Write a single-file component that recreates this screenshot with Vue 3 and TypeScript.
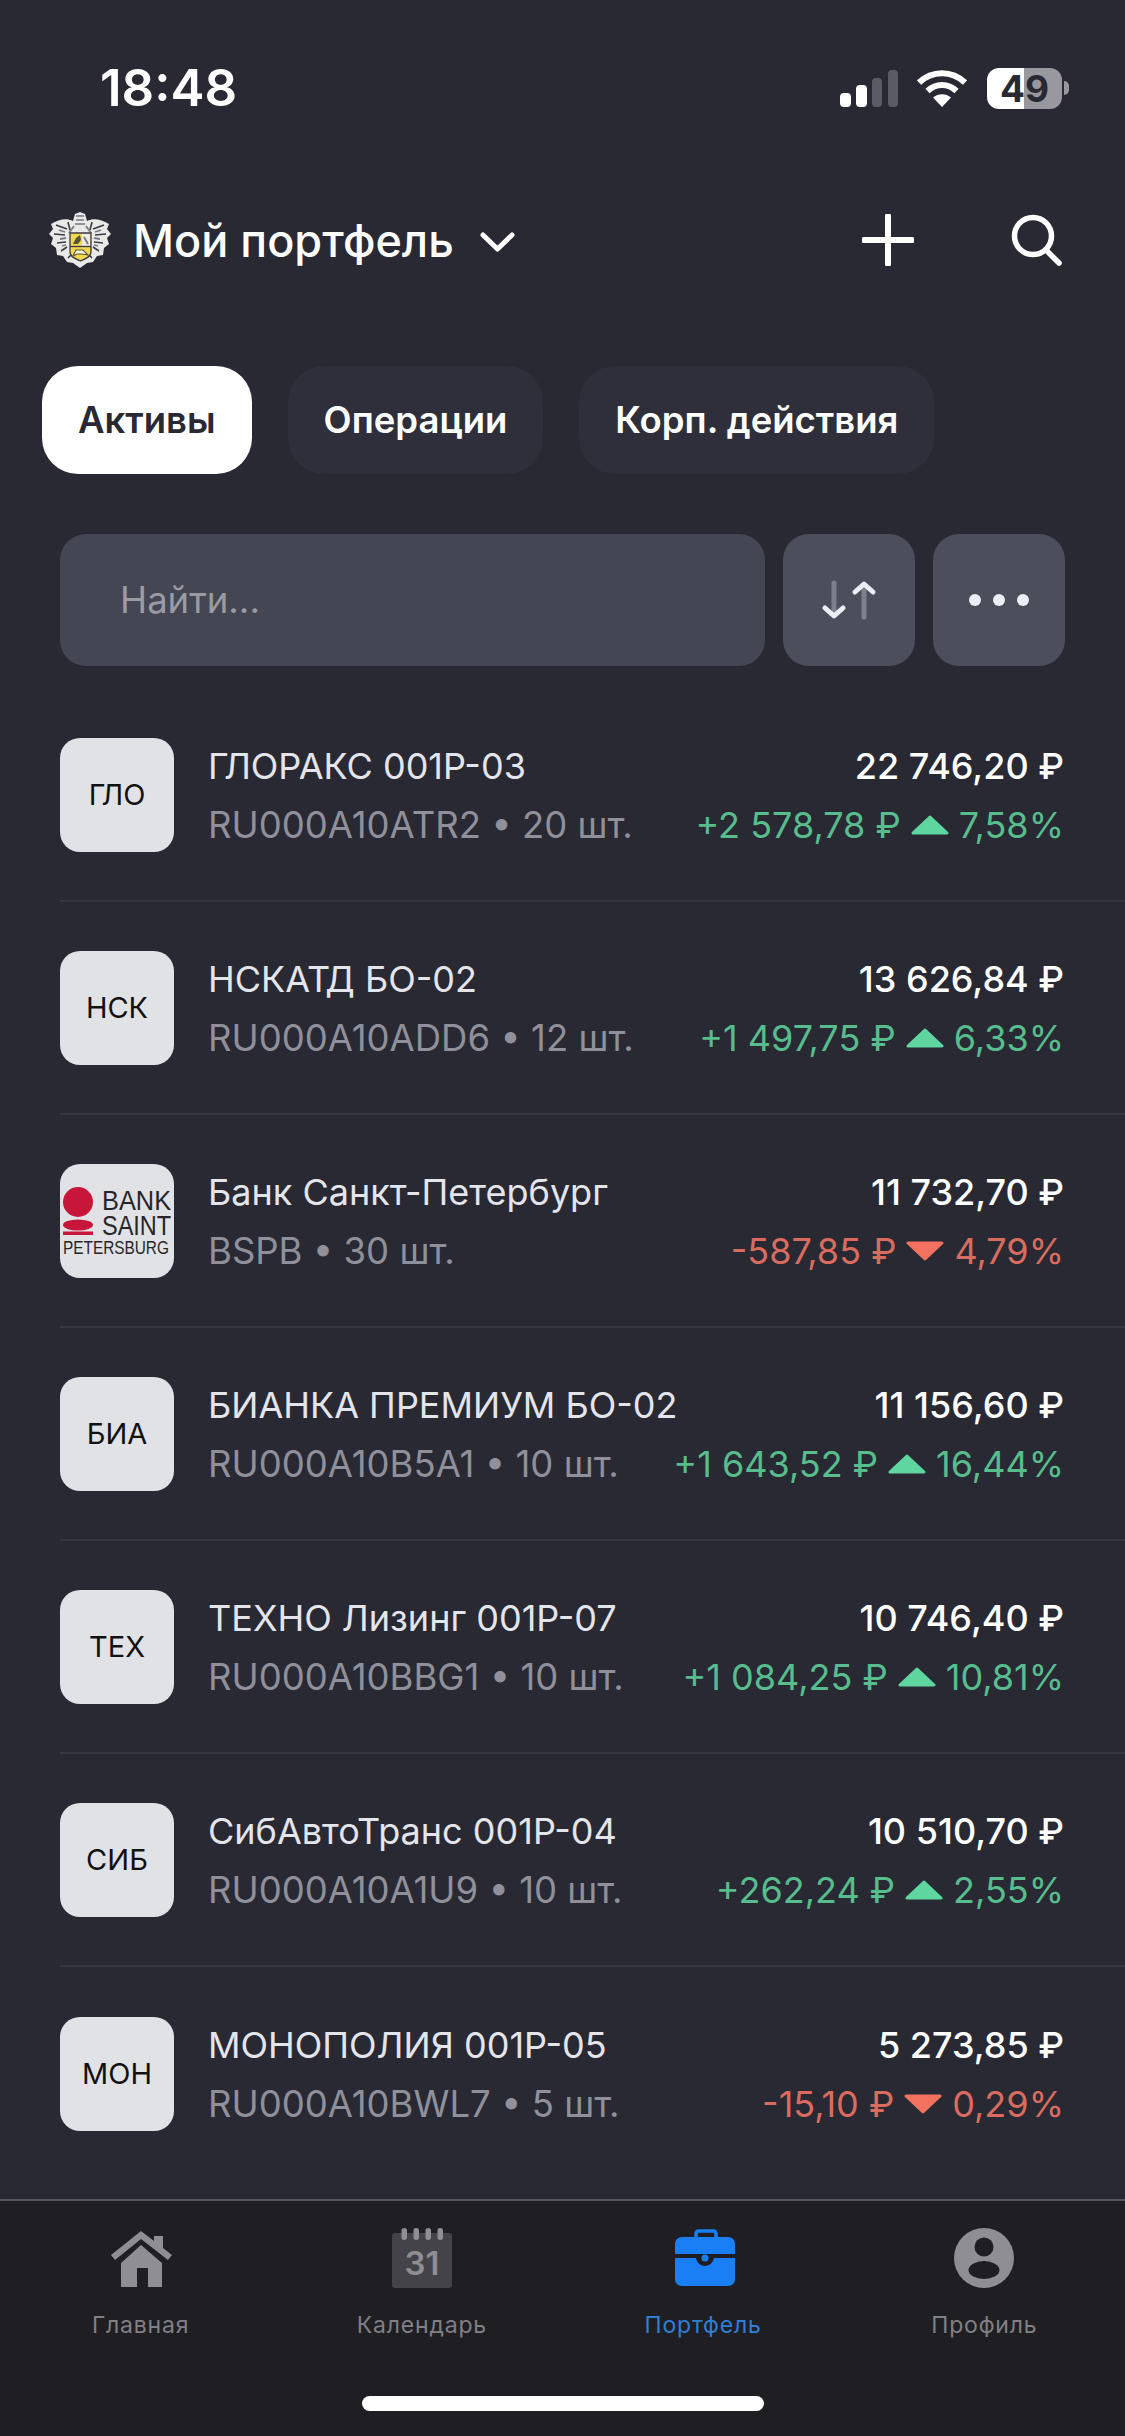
<script setup lang="ts">
interface Asset {
  tile: string
  name: string
  code: string
  qty: string
  total: string
  diff: string
  pct: string
  up: boolean
}

const assets: Asset[] = [
  { tile: 'ГЛО', name: 'ГЛОРАКС 001Р-03', code: 'RU000A10ATR2', qty: '20 шт.', total: '22 746,20 ₽', diff: '+2 578,78 ₽', pct: '7,58%', up: true },
  { tile: 'НСК', name: 'НСКАТД БО-02', code: 'RU000A10ADD6', qty: '12 шт.', total: '13 626,84 ₽', diff: '+1 497,75 ₽', pct: '6,33%', up: true },
  { tile: '', name: 'Банк Санкт-Петербург', code: 'BSPB', qty: '30 шт.', total: '11 732,70 ₽', diff: '-587,85 ₽', pct: '4,79%', up: false },
  { tile: 'БИА', name: 'БИАНКА ПРЕМИУМ БО-02', code: 'RU000A10B5A1', qty: '10 шт.', total: '11 156,60 ₽', diff: '+1 643,52 ₽', pct: '16,44%', up: true },
  { tile: 'ТЕХ', name: 'ТЕХНО Лизинг 001Р-07', code: 'RU000A10BBG1', qty: '10 шт.', total: '10 746,40 ₽', diff: '+1 084,25 ₽', pct: '10,81%', up: true },
  { tile: 'СИБ', name: 'СибАвтоТранс 001Р-04', code: 'RU000A10A1U9', qty: '10 шт.', total: '10 510,70 ₽', diff: '+262,24 ₽', pct: '2,55%', up: true },
  { tile: 'МОН', name: 'МОНОПОЛИЯ 001Р-05', code: 'RU000A10BWL7', qty: '5 шт.', total: '5 273,85 ₽', diff: '-15,10 ₽', pct: '0,29%', up: false },
]

const tabs = ['Активы', 'Операции', 'Корп. действия']
</script>

<template>
  <div class="screen">
    <div class="status">
      <span class="time">18:48</span>
      <div class="status-icons">
        <svg class="signal" width="58" height="37" viewBox="0 0 58 37">
          <rect x="0" y="23" width="11" height="14" rx="4" fill="#fff" />
          <rect x="16" y="15" width="11" height="22" rx="4" fill="#fff" />
          <rect x="32" y="8" width="10" height="29" rx="4" fill="#5a5b66" />
          <rect x="48" y="0" width="10" height="37" rx="4" fill="#5a5b66" />
        </svg>
        <svg class="wifi" width="50" height="37" viewBox="0 0 50 37">
          <path d="M2 12.5C15 0 35 0 48 12.5" fill="none" stroke="#fff" stroke-width="6" />
          <path d="M10.5 21C19 13 31 13 39.500 21" fill="none" stroke="#fff" stroke-width="6" />
          <path d="M25 37L16 27.500C21 23 29 23 34 27.500Z" fill="#fff" />
        </svg>
        <div class="battery"><span>49</span></div>
        <div class="battery-cap"></div>
      </div>
    </div>

    <header class="head">
      <svg class="emblem" width="66" height="60" viewBox="0 0 66 60">
        <path d="M26 11L28 4L33 2L38 4L40 11C46 8 54 9 62 14L60 19L64 24L60 28L62 34L57 38L56 45L50 46L46 52L40 53L33 58L26 53L20 52L16 46L10 45L9 38L4 34L6 28L2 24L6 19L4 14C12 9 20 8 26 11Z" fill="#e9e9e7" />
        <path d="M29 6H37M29 10H37M28 14H38" stroke="#77787e" stroke-width="1.500" fill="none" />
        <path d="M9 15L20 19M7 24L18 25M10 33L19 32M14 41L20 37M21 12L23 20M45 12L43 20M57 15L46 19M59 24L48 25M56 33L47 32M52 41L46 37M21 48L25 44M45 48L41 44" stroke="#3a3b44" stroke-width="1.600" fill="none" />
        <path d="M12 20L18 22M13 29L19 28M15 36L19 35M54 20L48 22M53 29L47 28M51 36L47 35M27 16L22 23M39 16L44 23" stroke="#7c7d84" stroke-width="1.800" fill="none" />
        <path d="M23 23H44V42C44 47 38 49 33.500 51C29 49 23 47 23 42Z" fill="#efd84b" stroke="#3a3b44" stroke-width="1.300" />
        <path d="M35 24H43V36H35Z" fill="#ecebe2" />
        <path d="M23 36.500H44" stroke="#3a3b44" stroke-width="1.300" />
        <path d="M26 34L29 28L33 25L34 30L31 34Z" fill="#55553a" />
        <path d="M26 46L29 40L36 40L41 45L35 44L30 44Z" fill="#faf6d8" stroke="#55553a" stroke-width="1.100" />
        <path d="M37 27L41 34" stroke="#77776a" stroke-width="1.800" />
      </svg>
      <span class="title">Мой портфель</span>
      <svg class="chevron" width="35" height="20" viewBox="0 0 35 20">
        <path d="M3 3L17.500 17L32 3" fill="none" stroke="#fff" stroke-width="5" stroke-linecap="round" stroke-linejoin="round" />
      </svg>
      <svg class="plus" width="52" height="52" viewBox="0 0 52 52">
        <path d="M26 2V50M2 26H50" fill="none" stroke="#fff" stroke-width="6" stroke-linecap="round" />
      </svg>
      <svg class="search" width="52" height="52" viewBox="0 0 52 52">
        <circle cx="23" cy="22" r="18.500" fill="none" stroke="#fff" stroke-width="5.500" />
        <path d="M37 37L49 49" fill="none" stroke="#fff" stroke-width="5.500" stroke-linecap="round" />
      </svg>
    </header>

    <nav class="tabs">
      <button v-for="(tab, i) in tabs" :key="tab" class="tab" :class="{ active: i === 0 }">{{ tab }}</button>
    </nav>

    <div class="tools">
      <div class="find"><span>Найти...</span></div>
      <button class="tool">
        <svg width="60" height="50" viewBox="4 -2 60 50">
          <path d="M19 6V38" stroke="#7d7f8c" stroke-width="5" stroke-linecap="round" />
          <path d="M49 10V40" stroke="#7d7f8c" stroke-width="5" stroke-linecap="round" />
          <path d="M10 31L19 39L28 31" fill="none" stroke="#eceef6" stroke-width="5" stroke-linecap="round" stroke-linejoin="round" />
          <path d="M40 15L49 7L58 15" fill="none" stroke="#eceef6" stroke-width="5" stroke-linecap="round" stroke-linejoin="round" />
        </svg>
      </button>
      <button class="tool">
        <svg width="60" height="14" viewBox="0 0 60 14">
          <circle cx="6" cy="7" r="6" fill="#eceef6" />
          <circle cx="30" cy="7" r="6" fill="#eceef6" />
          <circle cx="54" cy="7" r="6" fill="#eceef6" />
        </svg>
      </button>
    </div>

    <ul class="list">
      <li v-for="item in assets" :key="item.code" class="row">
        <div class="tile">
          <svg v-if="!item.tile" width="114" height="114" viewBox="0 0 114 114">
            <circle cx="18" cy="38" r="15" fill="#c8153a" />
            <ellipse cx="18" cy="61" rx="15" ry="5.500" fill="#c8153a" />
            <rect x="3" y="67.500" width="30" height="3.500" fill="#c8153a" />
            <text class="bank" font-size="27" transform="translate(42 46) scale(0.94 1)">BANK</text>
            <text class="bank" font-size="27" transform="translate(42 71) scale(0.87 1)">SAINT</text>
            <text class="bank" font-size="19" transform="translate(3 90) scale(0.81 1)">PETERSBURG</text>
          </svg>
          <span v-else>{{ item.tile }}</span>
        </div>
        <div class="info">
          <div class="name">{{ item.name }}</div>
          <div class="code">{{ item.code }} • {{ item.qty }}</div>
        </div>
        <div class="money">
          <div class="total">{{ item.total }}</div>
          <div class="change" :class="item.up ? 'up' : 'down'">
            <span>{{ item.diff }}</span>
            <svg v-if="item.up" width="38" height="20" viewBox="0 0 38 20">
              <path d="M19 2L36 18H2Z" fill="#5fd6a0" stroke="#5fd6a0" stroke-width="3" stroke-linejoin="round" />
            </svg>
            <svg v-else width="38" height="20" viewBox="0 0 38 20">
              <path d="M2 2H36L19 18Z" fill="#f3725f" stroke="#f3725f" stroke-width="3" stroke-linejoin="round" />
            </svg>
            <span>{{ item.pct }}</span>
          </div>
        </div>
      </li>
    </ul>

    <footer class="bar">
      <div class="bar-items">
        <div class="bar-item">
          <svg width="60" height="60" viewBox="0 0 60 60">
            <path d="M0 27L30 3L43 13V8H52V20L61 27L57 32L30 11L4 32Z" fill="#8e8e93" />
            <path d="M10 35L30 17L51 35V59H37V40H26V59H10Z" fill="#8e8e93" />
          </svg>
          <span>Главная</span>
        </div>
        <div class="bar-item">
          <svg width="60" height="60" viewBox="0 0 60 60">
            <rect x="0" y="5" width="60" height="55" rx="3" fill="#434349" />
            <rect x="9.500" y="0" width="5.500" height="12" rx="2.700" fill="#8e8e93" />
            <rect x="21.500" y="0" width="5.500" height="12" rx="2.700" fill="#8e8e93" />
            <rect x="33.500" y="0" width="5.500" height="12" rx="2.700" fill="#8e8e93" />
            <rect x="45.500" y="0" width="5.500" height="12" rx="2.700" fill="#8e8e93" />
            <text x="30" y="47" class="day" text-anchor="middle">31</text>
          </svg>
          <span>Календарь</span>
        </div>
        <div class="bar-item current">
          <svg width="60" height="60" viewBox="-2 0 60 60">
            <path d="M21 9V6C21 4 22 3 24 3H38C40 3 41 4 41 6V9" fill="none" stroke="#1a7ff5" stroke-width="3.500" />
            <path d="M0 26V16C0 12 3 9 7 9H53C57 9 60 12 60 16V26Z" fill="#1a7ff5" />
            <path d="M0 30H21C22 35 26 38 30 38C34 38 38 35 39 30H60V51C60 55 57 58 53 58H7C3 58 0 55 0 51Z" fill="#1a7ff5" />
            <circle cx="30" cy="30" r="3.500" fill="#1a7ff5" />
          </svg>
          <span>Портфель</span>
        </div>
        <div class="bar-item">
          <svg width="60" height="60" viewBox="0 0 60 60">
            <circle cx="30" cy="30" r="30" fill="#8e8e93" />
            <circle cx="30" cy="19" r="9.500" fill="#1f1f23" />
            <ellipse cx="30" cy="42" rx="15.500" ry="9" fill="#1f1f23" />
          </svg>
          <span>Профиль</span>
        </div>
      </div>
      <div class="home-line"></div>
    </footer>
  </div>
</template>

<style>
html,
body {
  margin: 0;
  background: #282933;
}
</style>

<style scoped>
.screen {
  width: 1125px;
  height: 2436px;
  display: flex;
  flex-direction: column;
  overflow: hidden;
  background: #282933;
  color: #fff;
  font-family: Inter, "Liberation Sans", sans-serif;
}
.status {
  height: 176px;
  box-sizing: border-box;
  padding: 60px 56px 0 100px;
  display: flex;
  justify-content: space-between;
  align-items: flex-start;
}
.time {
  font-size: 51px;
  line-height: 56px;
  font-weight: 600;
}
.status-icons {
  display: flex;
  align-items: center;
  height: 56px;
}
.wifi {
  margin-left: 19px;
}
.battery {
  margin-left: 20px;
  width: 75px;
  height: 41px;
  border-radius: 12px;
  background: linear-gradient(90deg, #fff 49%, #98989e 49%);
  color: #282933;
  font-size: 37px;
  line-height: 41px;
  font-weight: 700;
  text-align: center;
}
.battery-cap {
  width: 5px;
  height: 14px;
  margin-left: 2px;
  border-radius: 0 6px 6px 0;
  background: #98989e;
}
.head {
  height: 128px;
  display: flex;
  align-items: center;
  padding: 0 63px 0 47px;
}
.title {
  margin-left: 20px;
  font-size: 45px;
  font-weight: 500;
}
.chevron {
  margin-left: 26px;
  margin-top: 4px;
}
.plus {
  margin-left: auto;
}
.search {
  margin-left: 96px;
}
.tabs {
  display: flex;
  gap: 36px;
  padding: 62px 0 0 42px;
}
.tab {
  height: 108px;
  padding: 0 36px;
  border: none;
  border-radius: 36px;
  background: #2e2f3a;
  color: #fff;
  font-family: inherit;
  font-size: 36.500px;
  font-weight: 600;
}
.tab.active {
  background: #fff;
  color: #282933;
}
.tools {
  display: flex;
  gap: 18px;
  padding: 60px 60px 0;
}
.find {
  flex: 1;
  height: 132px;
  display: flex;
  align-items: center;
  padding-left: 60px;
  border-radius: 26px;
  background: #444653;
  color: #9a9ba3;
  font-size: 36.500px;
}
.tool {
  width: 132px;
  height: 132px;
  padding: 0;
  border: none;
  border-radius: 26px;
  background: #4c4e5b;
  display: flex;
  align-items: center;
  justify-content: center;
}
.list {
  flex: 1;
  list-style: none;
  margin: 0;
  padding: 23px 0 0 60px;
}
.row {
  height: 213px;
  box-sizing: border-box;
  display: flex;
  align-items: center;
  padding-right: 61px;
  border-bottom: 2px solid #353640;
}
.row:last-child {
  border-bottom: none;
}
.tile {
  width: 114px;
  height: 114px;
  flex-shrink: 0;
  display: flex;
  align-items: center;
  justify-content: center;
  overflow: hidden;
  border-radius: 20px;
  background: #e1e2e5;
  color: #111;
  font-size: 29px;
}
.bank {
  font-family: "Liberation Sans", sans-serif;
  fill: #26262a;
}
.info {
  flex: 1;
  min-width: 0;
  margin-left: 34px;
  padding-top: 2px;
  white-space: nowrap;
}
.name {
  font-size: 36px;
  line-height: 44px;
  color: #e4e5ea;
}
.code {
  margin-top: 15px;
  font-size: 36.500px;
  line-height: 44px;
  color: #8f9099;
}
.money {
  flex-shrink: 0;
  padding-top: 2px;
  text-align: right;
  white-space: nowrap;
}
.total {
  font-size: 36px;
  line-height: 44px;
  font-weight: 500;
}
.change {
  margin-top: 15px;
  display: flex;
  justify-content: flex-end;
  align-items: center;
  gap: 10px;
  font-size: 36px;
  line-height: 44px;
}
.up {
  color: #58bd8d;
}
.down {
  color: #d96c5f;
}
.bar {
  height: 237px;
  box-sizing: border-box;
  border-top: 2px solid #55565c;
  background: #1f1f23;
}
.bar-items {
  display: grid;
  grid-template-columns: repeat(4, 1fr);
  padding-top: 27px;
}
.bar-item {
  display: flex;
  flex-direction: column;
  align-items: center;
  gap: 20px;
  color: #808086;
  font-size: 23px;
  line-height: 34px;
  letter-spacing: 0.8px;
}
.bar-item.current {
  color: #2f7fd6;
}
.bar-item svg {
  overflow: visible;
}
.day {
  font-family: Inter, sans-serif;
  font-size: 33px;
  font-weight: 600;
  letter-spacing: 0;
  fill: #8e8e93;
}
.home-line {
  width: 402px;
  height: 15px;
  margin: 54px auto 0;
  border-radius: 8px;
  background: #fff;
}
</style>
